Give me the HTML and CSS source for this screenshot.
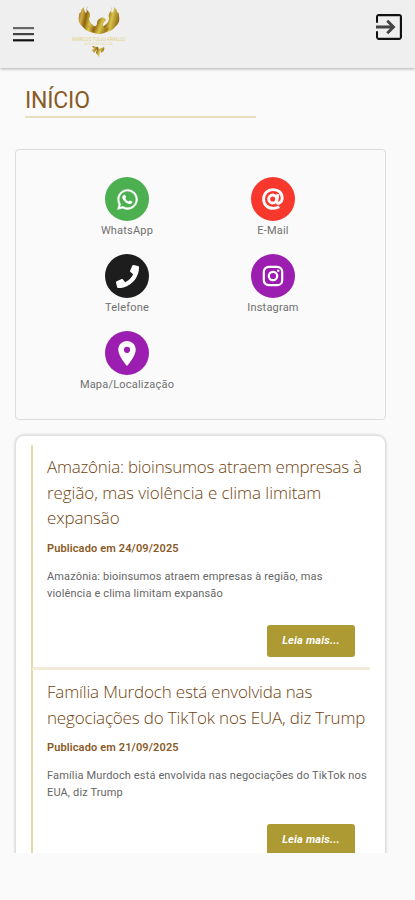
FILE: index.html
```html
<!DOCTYPE html>
<html lang="pt-BR">
<head>
<meta charset="utf-8">
<title>Início</title>
<link rel="stylesheet" href="styles.css">
</head>
<body>
<header class="topbar">
  <svg class="menu" viewBox="0 0 21 15"><path d="M0 0h21v2.2H0z" fill="#666"/><path d="M0 6h21v2.2H0z" fill="#444"/><path d="M0 12.2h21v2.2H0z" fill="#111"/></svg>
  <svg class="logo" viewBox="0 0 56 54">
    <defs><linearGradient id="gold" x1="0" x2="1" y2=".3"><stop offset="0" stop-color="#8b5b10"/><stop offset=".25" stop-color="#d0ad48"/><stop offset=".45" stop-color="#8c6410"/><stop offset=".7" stop-color="#d8c348"/><stop offset="1" stop-color="#98751c"/></linearGradient></defs>
    <g fill="url(#gold)">
      <path d="M17 3c-2 3-1 4 1 6 2 3 1 5 0 7 1 4 3 6 7 8l2 6c-7 0-12-2-15-6-4-3-5-7-4-11 0-2 0-3 2-4 0-2 1-3 3-5 0 2 0 4 2 6 2-2-1-4 2-7z"/>
      <path d="M40 3c2 3 1 4-1 6-2 3-1 5-1 7-1 4-3 6-7 8l-3 6c7 0 13-2 16-6 4-3 5-7 4-11 0-2 0-3-2-4 0-2-1-3-3-5 0 2 0 4-2 6-2-2 1-4-1-7z"/>
      <path d="M35 17c-1-2-3-3-5-2-3 1-4 3-4 5 0 3-2 4-5 4l-4-1c2 5 6 8 11 8 4 0 8-2 10-6-3 1-6 0-6-3 0-2 1-3 3-5z"/>
    </g>
    <path fill="url(#gold)" d="M21 43l6 1 1 2 5-2c1 3-1 5-3 6l-1-3-1 7-3-4 1-4-3 4-2-3 2-1z"/>
    <text x="1" y="37.600" textLength="53" lengthAdjust="spacingAndGlyphs" font-size="4.8" fill="#e0d180">MARCOS TULIO ARAUJO</text>
    <text x="13" y="42" textLength="29" lengthAdjust="spacingAndGlyphs" font-size="3" fill="#e8dfac">ADVOCACIA</text>
  </svg>
  <svg class="exit" viewBox="3 3 18 18"><path d="M10.09 15.59L11.5 17l5-5-5-5-1.41 1.41L12.67 11H3v2h9.67l-2.58 2.59z" fill="#444"/><path d="M19 3H5c-1.11 0-2 .9-2 2v4h1.4V4.5h15.1v15H4.4V15H3v4c0 1.1.89 2 2 2h14c1.1 0 2-.9 2-2V5c0-1.1-.9-2-2-2z" fill="#111"/></svg>
</header>
<main>
  <h1>INÍCIO</h1>
  <section class="contacts">
    <a class="contact"><span class="dot green"><svg width="23" height="23" viewBox="0 0 448 512"><path fill="#fff" stroke="#fff" stroke-width="10" d="M380.9 97.1C339 55.1 283.2 32 223.9 32c-122.4 0-222 99.6-222 222 0 39.1 10.2 77.3 29.6 111L0 480l117.700-30.900c32.400 17.700 68.900 27 106.100 27h.1c122.300 0 224.100-99.600 224.100-222 0-59.300-25.200-115-67.100-157zm-157 341.600c-33.200 0-65.700-8.900-94-25.700l-6.700-4-69.800 18.300L72 359.200l-4.400-7c-18.500-29.400-28.200-63.300-28.200-98.200 0-101.700 82.800-184.500 184.600-184.500 49.300 0 95.600 19.200 130.400 54.100 34.800 34.900 56.200 81.200 56.100 130.500 0 101.800-84.900 184.600-186.600 184.600z"/><path fill="#fff" d="M140 155c12-11 25-10 33 4l19 42c3 8-2 14-18 31 20 36 44 55 78 69 13-14 20-27 29-23l46 23c9 5 4 28-4 39-17 19-46 23-75 13-67-22-113-71-136-119-13-30-2-59 28-79z"/></svg></span><span class="label">WhatsApp</span></a>
    <a class="contact"><span class="dot red"><svg width="24" height="24" viewBox="0 0 24 24" fill="none" stroke="#fff"><circle cx="11.7" cy="12" r="4" stroke-width="2.9"/><path d="M17 7l-1.2 7c-.3 2 1 2.7 2.4 2.1 2-.8 3-2.6 3-5C21.2 5.8 17.6 2.600 12.300 2.600 6.600 2.600 2.600 6.700 2.600 12.200c0 5.500 4 9.200 9.600 9.200 2.300 0 4.200-.5 6-1.600" stroke-width="2.800"/></svg></span><span class="label">E-Mail</span></a>
    <a class="contact"><span class="dot black"><svg width="23" height="23" viewBox="0 0 512 512"><path fill="#fff" d="M493.400 24.600l-104-24c-11.300-2.600-22.900 3.300-27.500 13.900l-48 112c-4.200 9.800-1.400 21.300 6.900 28l60.600 49.600c-36 76.700-98.900 140.500-177.200 177.200l-49.600-60.600c-6.800-8.300-18.200-11.100-28-6.900l-112 48C3.900 366.500-2 378.100.6 389.400l24 104C27.100 504.200 36.700 512 48 512c256.100 0 464-207.500 464-464 0-11.200-7.700-20.900-18.600-23.400z"/></svg></span><span class="label">Telefone</span></a>
    <a class="contact"><span class="dot purple"><svg width="22" height="22" viewBox="0 0 22 22" fill="none" stroke="#fff" stroke-width="2.200"><rect x="1.800" y="1.800" width="18.400" height="18.400" rx="5"/><circle cx="11" cy="11" r="4.200"/><circle cx="16.200" cy="5.800" r="1.200" fill="#fff" stroke="none"/></svg></span><span class="label">Instagram</span></a>
    <a class="contact"><span class="dot purple"><svg width="18" height="25" viewBox="5 2 14 20"><path fill="#fff" d="M12 2C8.130 2 5 5.130 5 9c0 5.250 7 13 7 13s7-7.750 7-13c0-3.870-3.130-7-7-7zm0 9.500a2.500 2.500 0 0 1 0-5 2.500 2.500 0 0 1 0 5z"/></svg></span><span class="label">Mapa/Localização</span></a>
  </section>
  <div class="viewport">
    <section class="news">
      <article class="post">
        <h2><span class="tight">Amazônia: bioinsumos atraem empresas à</span><br><span class="loose">região, mas violência e clima limitam</span><br>expansão</h2>
        <p class="date">Publicado em 24/09/2025</p>
        <p class="summary">Amazônia: bioinsumos atraem empresas à região, mas<br>violência e clima limitam expansão</p>
        <a class="more">Leia mais...</a>
      </article>
      <article class="post">
        <h2>Família Murdoch está envolvida nas<br>negociações do TikTok nos EUA, diz Trump</h2>
        <p class="date">Publicado em 21/09/2025</p>
        <p class="summary">Família Murdoch está envolvida nas negociações do TikTok nos<br>EUA, diz Trump</p>
        <a class="more">Leia mais...</a>
      </article>
    </section>
  </div>
</main>
</body>
</html>
```
FILE: styles.css
```css
* { box-sizing: border-box; }
body {
  margin: 0;
  height: 900px;
  overflow: hidden;
  background: #fafafa;
  font-family: Roboto, sans-serif;
  color: #666;
}
h1, h2, p { margin: 0; }
.topbar {
  display: flex;
  align-items: flex-start;
  height: 68px;
  padding: 0 13px;
  background: #efefef;
  box-shadow: 0 1px 3px rgba(0, 0, 0, .3);
}
.menu { width: 21px; height: 15px; margin-top: 27px; }
.logo { width: 56px; height: 54px; margin: 3px 0 0 37px; }
.exit { width: 26px; height: 26px; margin: 14px 0 0 auto; }
h1 {
  width: 231px;
  height: 50px;
  margin-left: 25px;
  padding-top: 19px;
  border-bottom: 2px solid #e8dfbf;
  font-size: 23px;
  line-height: 28px;
  letter-spacing: -.2px;
  font-weight: 400;
  color: #8a5a26;
}
.contacts {
  display: grid;
  grid-template-columns: 146px 146px;
  grid-auto-rows: 77px;
  justify-content: center;
  width: 371px;
  height: 271px;
  margin: 31px 0 0 15px;
  padding: 27px 1px 0 0;
  border: 1px solid #dcdcdc;
  border-radius: 4px;
}
.contact { display: flex; flex-direction: column; align-items: center; }
.dot {
  display: flex;
  align-items: center;
  justify-content: center;
  width: 44px;
  height: 44px;
  border-radius: 50%;
}
.green { background: #4caf50; }
.red { background: #f8382c; }
.black { background: #1d1d1d; }
.purple { background: #9c1eb0; }
.label { margin-top: 2px; font-size: 11px; line-height: 16px; letter-spacing: .2px; color: #707070; }
.viewport {
  height: 422px;
  margin-top: 11px;
  padding: 4px 0 0 15px;
  overflow: hidden;
}
.news {
  width: 371px;
  height: 480px;
  padding: 9px 15px;
  background: #fff;
  border: 1px solid #e0e0e0;
  border-radius: 9px;
  box-shadow: 0 0 3px rgba(0, 0, 0, .2);
}
.post {
  display: flex;
  flex-direction: column;
  height: 225px;
  padding: 9px 0 0 14px;
  border-left: 2px solid #e5d9ac;
  border-bottom: 3px solid #f2ebd8;
}
h2 {
  font-family: "Open Sans", sans-serif;
  font-size: 17px;
  line-height: 25.5px;
  font-weight: 300;
  letter-spacing: -.17px;
  color: #70430f;
  white-space: nowrap;
}
.tight { letter-spacing: -.25px; }
.loose { letter-spacing: -.06px; }
.date { margin-top: 9px; font-size: 11px; line-height: 17px; letter-spacing: .13px; font-weight: 600; color: #8a5a26; }
.summary { margin-top: 11px; font-size: 11px; line-height: 17px; letter-spacing: .14px; white-space: nowrap; }
.more {
  align-self: flex-end;
  width: 88px;
  height: 32px;
  margin: 23px 15px 0 0;
  background: #ad9a32;
  border-radius: 3px;
  font-size: 11px;
  line-height: 32px;
  letter-spacing: .2px;
  font-weight: 700;
  font-style: italic;
  text-align: center;
  color: #fff;
}
```
